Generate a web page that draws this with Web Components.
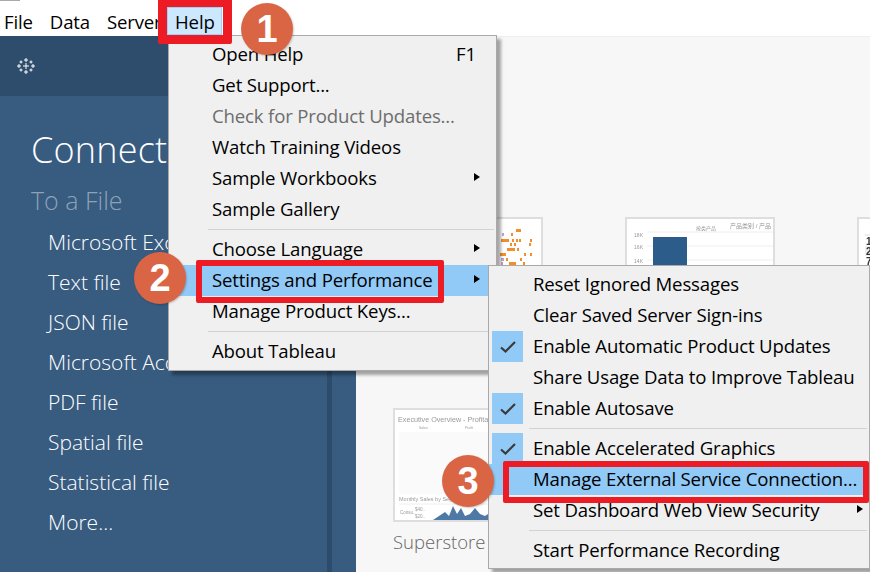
<!DOCTYPE html>
<html><head><meta charset="utf-8">
<style>
html,body{margin:0;padding:0;width:870px;height:572px;overflow:hidden;background:#fff}
body{position:relative;font-family:"Open Sans","Liberation Sans",sans-serif}
</style></head><body>
<app-shell>
  <menu-bar slot="bar">
    <bar-item>File</bar-item><bar-item>Data</bar-item><bar-item>Server</bar-item><bar-item open>Help</bar-item>
  </menu-bar>
  <side-panel slot="side">
    <side-link>Microsoft Excel</side-link>
    <side-link>Text file</side-link>
    <side-link>JSON file</side-link>
    <side-link>Microsoft Access</side-link>
    <side-link>PDF file</side-link>
    <side-link>Spatial file</side-link>
    <side-link>Statistical file</side-link>
    <side-link>More...</side-link>
  </side-panel>
  <work-gallery slot="main">
    <work-card><svg viewBox="0 0 146 110" width="146" height="110" fill="#f28e2b">
      <g><rect x="121" y="10" width="5" height="3"/><rect x="116" y="14" width="2" height="3"/><rect x="106" y="20" width="8" height="3"/><rect x="117" y="20" width="2" height="3"/><rect x="121" y="20" width="2" height="3"/><rect x="124" y="20" width="2" height="3"/><rect x="135" y="20" width="2" height="3"/><rect x="115" y="24" width="2" height="3"/><rect x="119" y="24" width="2" height="3"/><rect x="134" y="24" width="2" height="3"/><rect x="112" y="29" width="8" height="3"/><rect x="122" y="29" width="2" height="3"/><rect x="105" y="34" width="6" height="3"/><rect x="129" y="34" width="2" height="3"/><rect x="135" y="34" width="2" height="3"/><rect x="111" y="39" width="2" height="3"/><rect x="125" y="39" width="2" height="3"/><rect x="114" y="43" width="7" height="3"/><rect x="128" y="43" width="2" height="3"/></g>
      <g fill="#c9a0cf"><rect x="107" y="14" width="2" height="3"/><rect x="106" y="39" width="3" height="3"/><rect x="106" y="43" width="2" height="3"/></g>
    </svg></work-card>
    <work-card><svg viewBox="0 0 146 110" width="146" height="110" font-family="Liberation Sans, Noto Sans CJK SC, sans-serif" fill="#999">
      <text x="144" y="9" font-size="6" text-anchor="end">产品类别 / 产品</text>
      <text x="79" y="11" font-size="5" text-anchor="middle">按类产品</text>
      <path d="M20 13H146M20 27H146M20 41H146" stroke="#eee" fill="none"/>
      <text x="16" y="18" font-size="5" text-anchor="end">18K</text>
      <text x="16" y="30" font-size="5" text-anchor="end">16K</text>
      <text x="16" y="44" font-size="5" text-anchor="end">14K</text>
      <rect x="26" y="18" width="34" height="92" fill="#2c5c8a"/>
    </svg></work-card>
    <work-card><svg viewBox="0 0 146 110" width="146" height="110" font-family="Liberation Sans" font-weight="700" font-size="10" fill="#333">
      <path d="M6 16H146" stroke="#ddd"/><rect x="6" y="27" width="140" height="10" fill="#f0f0f0"/>
      <text x="7" y="26">1</text><text x="7" y="36">2</text><text x="7" y="46">7</text>
    </svg></work-card>
    <work-card caption="Superstore"><svg viewBox="0 0 146 110" width="146" height="110" font-family="Liberation Sans" fill="#9a9a9a">
      <text x="3" y="12" font-size="7.2">Executive Overview - Profitability</text>
      <text x="24" y="19" font-size="3.5">Sales</text><text x="70" y="19" font-size="3.5">Profit</text>
      <rect x="4" y="22" width="142" height="62" fill="#fafafa"/>
      <text x="4" y="91" font-size="5.5">Monthly Sales by Segment</text>
      <path d="M4 94H146" stroke="#eee"/>
      <text x="5" y="104" font-size="4.5">Consu..</text><text x="20" y="101" font-size="4.5">$40..</text><text x="20" y="108" font-size="4.5">$20..</text>
      <path d="M38 110L44 106L50 102L54 106L58 96L62 104L66 98L70 106L75 104L80 98L85 104L90 106L96 102L102 106V110Z" fill="#4e79a7"/>
    </svg></work-card>
  </work-gallery>
</app-shell>

<menu-list style="left:168px;top:35px;width:329px">
  <menu-entry shortcut="F1">Open Help</menu-entry>
  <menu-entry>Get Support...</menu-entry>
  <menu-entry disabled>Check for Product Updates...</menu-entry>
  <menu-entry>Watch Training Videos</menu-entry>
  <menu-entry arrow>Sample Workbooks</menu-entry>
  <menu-entry>Sample Gallery</menu-entry>
  <menu-sep></menu-sep>
  <menu-entry arrow>Choose Language</menu-entry>
  <menu-entry arrow active>Settings and Performance</menu-entry>
  <menu-entry>Manage Product Keys...</menu-entry>
  <menu-sep></menu-sep>
  <menu-entry>About Tableau</menu-entry>
</menu-list>
<menu-list style="left:488px;top:265px;width:382px;padding-bottom:2px;--gutter:44px;--arrow-right:6px">
  <menu-entry>Reset Ignored Messages</menu-entry>
  <menu-entry>Clear Saved Server Sign-ins</menu-entry>
  <menu-entry checked>Enable Automatic Product Updates</menu-entry>
  <menu-entry>Share Usage Data to Improve Tableau</menu-entry>
  <menu-entry checked>Enable Autosave</menu-entry>
  <menu-sep></menu-sep>
  <menu-entry checked>Enable Accelerated Graphics</menu-entry>
  <menu-entry active>Manage External Service Connection...</menu-entry>
  <menu-entry arrow>Set Dashboard Web View Security</menu-entry>
  <menu-sep></menu-sep>
  <menu-entry>Start Performance Recording</menu-entry>
</menu-list>

<red-frame style="left:158px;top:-2px;width:74px;height:46px;--w:9px"></red-frame>
<red-frame style="left:196px;top:260px;width:248px;height:43px"></red-frame>
<red-frame style="left:503px;top:461px;width:366px;height:42px"></red-frame>
<step-badge style="left:241px;top:3px">1</step-badge>
<step-badge style="left:134px;top:252px">2</step-badge>
<step-badge style="left:442px;top:455px">3</step-badge>

<template id="t-shell"><style>
:host{display:flex;flex-direction:column;width:870px;height:572px;overflow:hidden}
.body{display:flex;flex:1;min-height:0}
</style><slot name="bar"></slot><div class="body"><slot name="side"></slot><slot name="main"></slot></div></template>

<template id="t-bar"><style>
:host{display:flex;align-items:flex-start;box-sizing:border-box;height:36px;padding:7px 0 0 0;background:#fff;position:relative;font:18.6px "Open Sans",sans-serif;letter-spacing:-.16px;color:#000}
:host::before{content:"";position:absolute;left:0;top:0;width:20px;height:1px;background:#aaa}
</style><slot></slot></template>

<template id="t-baritem"><style>
:host{display:flex;align-items:center;height:28px;padding:1px 12px 0 3px;box-sizing:border-box;border:1px solid transparent}
:host([open]){background:#cce8ff;border-color:#99d1ff;padding:1px 0 0 7.5px;margin-left:-8px;width:55px}
</style><slot></slot></template>

<template id="t-side"><style>
:host{display:flex;flex-direction:column;width:356px;flex:none;background:#385b80;color:#fff}
.top{height:60px;flex:none;background:#2e4d6c;display:flex;align-items:center;padding-left:17px}
.wrap{flex:1;display:flex;min-height:0}
.col{box-sizing:border-box;padding:30px 0 0 31px;border-right:5px solid #2d4c6b;width:332px;flex:none}
h1{margin:0;font:300 36px/48px "Open Sans",sans-serif;letter-spacing:.2px;height:48px;color:#fff}
h2{margin:6px 0 0;font:300 25px/40px "Open Sans",sans-serif;color:#8ca2b9;height:40px}
.links{display:flex;flex-direction:column;padding:2px 0 0 17px}
svg{display:block}
</style>
<div class="top"><svg width="18" height="18" viewBox="0 0 18 18" stroke="#fff" stroke-width="1" fill="none">
<path d="M9 6V12M6 9H12M9 1V5M7 3H11M9 13V17M7 15H11M2 7V11M0 9H4M16 7V11M14 9H18M4 3.5V6.5M2.5 5H5.5M14 3.5V6.5M12.5 5H15.5M4 11.5V14.5M2.5 13H5.5M14 11.5V14.5M12.5 13H15.5"/></svg></div>
<div class="wrap"><div class="col"><h1>Connect</h1><h2>To a File</h2><div class="links"><slot></slot></div></div></div></template>

<template id="t-link"><style>
:host{display:block;height:40px;font:300 21px/40px "Open Sans",sans-serif;color:#fff;white-space:nowrap}
</style><slot></slot></template>

<template id="t-gallery"><style>
:host{display:grid;flex:1;min-width:0;box-sizing:border-box;background:#f7f7f7;border-top:1px solid #efefef;overflow:hidden;
grid-template-columns:repeat(3,150px);grid-auto-rows:114px;column-gap:82px;row-gap:77px;padding:180px 0 0 37px}
</style><slot></slot></template>

<template id="t-card"><style>
:host{display:block;position:relative;width:150px;height:114px}
.thumb{width:150px;height:114px;box-sizing:border-box;border:2px solid #dedede;background:#fff;overflow:hidden}
.blur{filter:blur(.35px)}
::slotted(svg){display:block}
.cap{position:absolute;left:0;top:120px;font:300 18.5px/28px "Open Sans",sans-serif;color:#666;white-space:nowrap}
</style><div class="thumb"><div class="blur"><slot></slot></div></div><div class="cap"></div></template>

<template id="t-menu"><style>
:host{position:absolute;display:block;box-sizing:border-box;background:#f0f0f0;border:1px solid #a9a9a9;box-shadow:4px 4px 3px rgba(0,0,0,.35);padding:3px 0;font:18.6px "Open Sans",sans-serif;letter-spacing:-.16px;color:#000;--gutter:43px}
</style><slot></slot></template>

<template id="t-entry"><style>
:host{display:flex;align-items:center;height:31px;position:relative;padding:0 0 2px var(--gutter);box-sizing:border-box;white-space:nowrap}
:host([active]){background:#91c9f7}
:host([disabled]){color:#6d6d6d}
.s{position:absolute;right:20px}
.a{position:absolute;right:var(--arrow-right,16px);top:10px;width:0;height:0;border-left:6px solid #000;border-top:4.5px solid transparent;border-bottom:4.5px solid transparent;display:none}
:host([arrow]) .a{display:block}
.c{position:absolute;left:3px;top:0;width:31px;height:31px;background:#91c9f7;display:none;align-items:center;justify-content:center}
:host([checked]) .c{display:flex}
</style><span class="c"><svg width="16" height="12" viewBox="0 0 16 12" fill="none" stroke="#3a3a3a" stroke-width="2.2"><path d="M1 6.5L5.5 10.5L15 1"/></svg></span><slot></slot><span class="s"></span><span class="a"></span></template>

<template id="t-sep"><style>
:host{display:block;height:9px;position:relative}
:host::after{content:"";position:absolute;left:calc(var(--gutter) - 4px);right:2px;top:4px;height:1px;background:#d2d2d2}
</style></template>

<template id="t-frame"><style>
:host{position:absolute;display:block;box-sizing:border-box;border:var(--w,6.5px) solid #ed1c24;border-radius:2px}
</style></template>

<template id="t-badge"><style>
:host{position:absolute;display:flex;align-items:center;justify-content:center;width:52px;height:52px;border-radius:50%;background:#da6544;color:#fff;font:700 38px/1 "Liberation Sans",sans-serif;box-shadow:1px 1px 2px rgba(0,0,0,.2)}
</style><slot></slot></template>

<script>
const reg=(name,tid,init)=>customElements.define(name,class extends HTMLElement{
  constructor(){super();const r=this.attachShadow({mode:'open'});r.appendChild(document.getElementById(tid).content.cloneNode(true));}
  connectedCallback(){init&&init(this)}
});
reg('app-shell','t-shell');
reg('menu-bar','t-bar');
reg('bar-item','t-baritem');
reg('side-panel','t-side');
reg('side-link','t-link');
reg('work-gallery','t-gallery');
reg('work-card','t-card',el=>{el.shadowRoot.querySelector('.cap').textContent=el.getAttribute('caption')||''});
reg('menu-list','t-menu');
reg('menu-entry','t-entry',el=>{el.shadowRoot.querySelector('.s').textContent=el.getAttribute('shortcut')||''});
reg('menu-sep','t-sep');
reg('red-frame','t-frame');
reg('step-badge','t-badge');
</script>
</body></html>
